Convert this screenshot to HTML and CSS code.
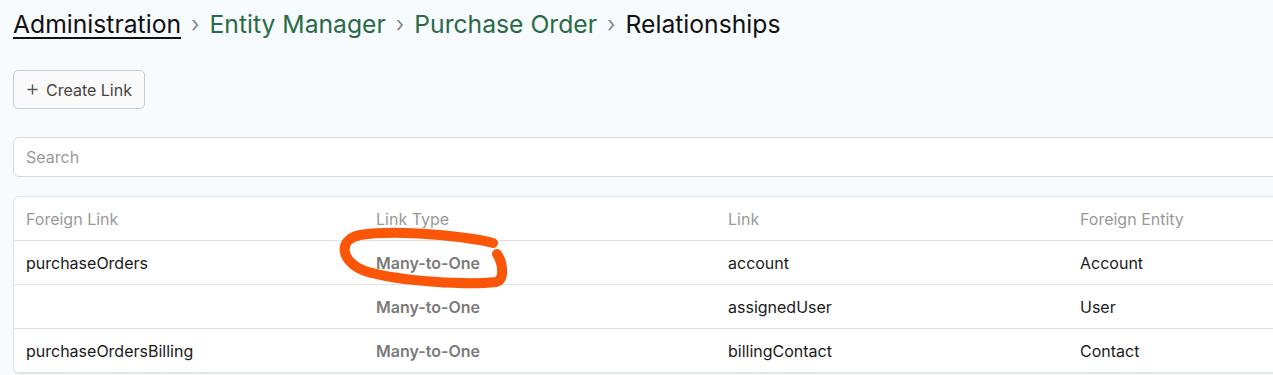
FILE: index.html
```html
<!DOCTYPE html>
<html lang="en">
<head>
  <meta charset="UTF-8" />
  <title>Relationships</title>
  <meta name="viewport" content="width=device-width, initial-scale=1.0" />
  <link rel="stylesheet" href="styles.css">
</head>
<body>

  <div class="page">
    <div class="breadcrumb">
      <a class="crumb-root" href="#">Administration</a>
      <span class="sep">&rsaquo;</span>
      <a class="crumb" href="#">Entity Manager</a>
      <span class="sep">&rsaquo;</span>
      <a class="crumb" href="#">Purchase Order</a>
      <span class="sep">&rsaquo;</span>
      <span class="crumb-current">Relationships</span>
    </div>

    <div class="toolbar">
      <button class="btn">
        <svg class="plus" width="11" height="11" viewBox="0 0 11 11">
          <path d="M5.5 0.5v10M0.5 5.5h10" stroke="#555" stroke-width="1.4" fill="none"/>
        </svg>
        Create Link
      </button>
    </div>

    <input class="search" type="text" placeholder="Search">

    <div class="table-wrap">
      <table class="links">
        <thead>
          <tr>
            <th class="col-first">Foreign Link</th>
            <th class="col-mid">Link Type</th>
            <th class="col-mid">Link</th>
            <th>Foreign Entity</th>
          </tr>
        </thead>
        <tbody>
          <tr>
            <td>purchaseOrders</td>
            <td class="type">Many-to-One</td>
            <td>account</td>
            <td>Account</td>
          </tr>
          <tr>
            <td></td>
            <td class="type">Many-to-One</td>
            <td>assignedUser</td>
            <td>User</td>
          </tr>
          <tr>
            <td>purchaseOrdersBilling</td>
            <td class="type">Many-to-One</td>
            <td>billingContact</td>
            <td>Contact</td>
          </tr>
        </tbody>
      </table>
    </div>
  </div>

  <!-- hand-drawn highlight over the first link type -->
  <svg class="scribble" width="1273" height="375" viewBox="0 0 1273 375">
    <path d="M493,243 C470,237 400,229 360,235 C336,240 342,263 365,271 C400,282 470,285 496,282 C505,280 503,263 497,254"
          fill="none" stroke="#fb5607" stroke-width="10" stroke-linecap="round" stroke-linejoin="round"/>
  </svg>

</body>
</html>
```

FILE: styles.css
```css
body {
  font-family: Inter, 'Noto Sans', sans-serif;
  background: #f7fbfd;
  margin: 0;
  color: #1f1f1f;
  overflow: hidden;
}

.page {
  width: 1440px;
  padding: 8px 13px;
}

.breadcrumb {
  display: flex;
  align-items: center;
  gap: 10px;
  font-size: 24.7px;
  height: 32px;
}

.breadcrumb a {
  text-decoration: none;
}

.crumb-root {
  color: #111;
  text-decoration: underline !important;
  text-underline-offset: 4px;
  text-decoration-thickness: 2px;
}

.crumb {
  color: #2a6b47;
}

.crumb-current {
  color: #111;
}

.sep {
  color: #8a8a8a;
  font-size: 22px;
}

.toolbar {
  display: flex;
  margin-top: 30px;
}

.btn {
  display: flex;
  align-items: center;
  gap: 8px;
  font-family: inherit;
  font-size: 16px;
  color: #454545;
  background: #fafafa;
  border: 1px solid #c9ced2;
  border-radius: 5px;
  height: 39px;
  padding: 0 12px 0 13px;
  cursor: pointer;
}

.search {
  display: block;
  box-sizing: border-box;
  width: 100%;
  height: 40px;
  margin-top: 28px;
  padding: 0 12px;
  font-family: inherit;
  font-size: 16px;
  background: #fff;
  border: 1px solid #d3dade;
  border-radius: 6px;
}

.search::placeholder {
  color: #999;
}

.table-wrap {
  margin-top: 19px;
  background: #fff;
  border: 1px solid #dde3e6;
  border-radius: 6px;
}

.links {
  width: 100%;
  table-layout: fixed;
  border-collapse: collapse;
  font-size: 16px;
}

.links th,
.links td {
  text-align: left;
  padding: 0 12px;
  height: 43px;
  border-bottom: 1px solid #dde3e6;
}

.links th.col-first {
  width: 326px;
}

.links th.col-mid {
  width: 328px;
}

.links th {
  font-weight: normal;
  color: #999;
}

.links td {
  color: #1a1a1a;
}

.links td.type {
  color: #7a7a7a;
  font-weight: 600;
}

.scribble {
  position: absolute;
  left: 0;
  top: 0;
  pointer-events: none;
}
```
